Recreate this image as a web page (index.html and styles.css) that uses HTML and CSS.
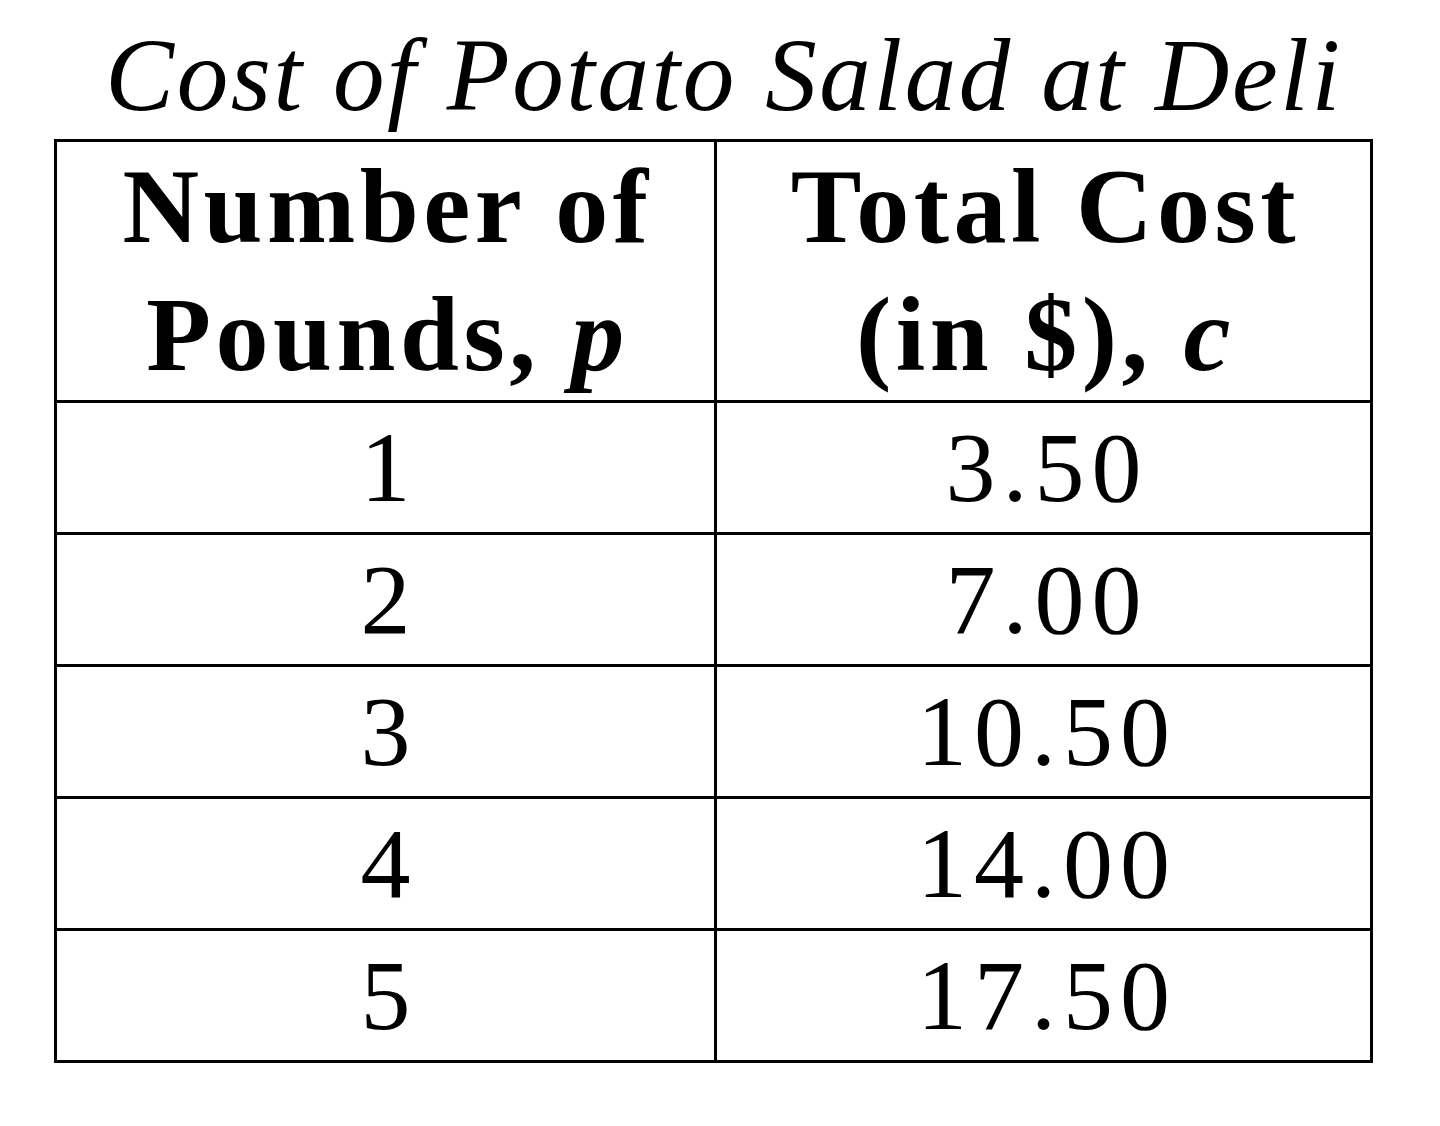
FILE: index.html
```html
<!DOCTYPE html>
<html>
<head>
<meta charset="utf-8">
<link rel="stylesheet" href="styles.css">
</head>
<body>
<div class="page">
  <div class="title">Cost of Potato Salad at Deli</div>
  <table class="data">
    <thead>
      <tr>
        <th class="col-left">Number of<br>Pounds, <i>p</i></th>
        <th class="col-right">Total Cost<br>(in $), <i>c</i></th>
      </tr>
    </thead>
    <tbody>
      <tr><td>1</td><td>3.50</td></tr>
      <tr><td>2</td><td>7.00</td></tr>
      <tr><td>3</td><td>10.50</td></tr>
      <tr><td>4</td><td>14.00</td></tr>
      <tr><td>5</td><td>17.50</td></tr>
    </tbody>
  </table>
</div>
</body>
</html>
```

FILE: styles.css
```css
html, body {
  margin: 0;
  padding: 0;
  background: #ffffff;
}

.page {
  width: 1440px;
  height: 1126px;
  padding: 24px 0 0 54px;
  box-sizing: border-box;
  font-family: "Liberation Serif", "Times New Roman", serif;
  color: #000;
}

.title {
  width: 1318px;
  text-align: center;
  font-style: italic;
  font-size: 103px;
  line-height: 102px;
  letter-spacing: 2.6px;
  padding-left: 22px;
  box-sizing: border-box;
  margin-bottom: 13px;
}

.data {
  border-collapse: collapse;
  width: 1319px;
  table-layout: fixed;
}

.data th,
.data td {
  border: 3px solid #000;
  padding: 0;
  text-align: center;
  vertical-align: middle;
}

.data th {
  font-weight: bold;
  font-size: 106px;
  line-height: 128px;
  height: 258px;
  letter-spacing: 4.5px;
  padding-left: 4px;
}

.col-left {
  width: 653px;
}

.data td {
  font-size: 100px;
  line-height: 126px;
  height: 129px;
  letter-spacing: 7px;
  padding-left: 7px;
}
```
